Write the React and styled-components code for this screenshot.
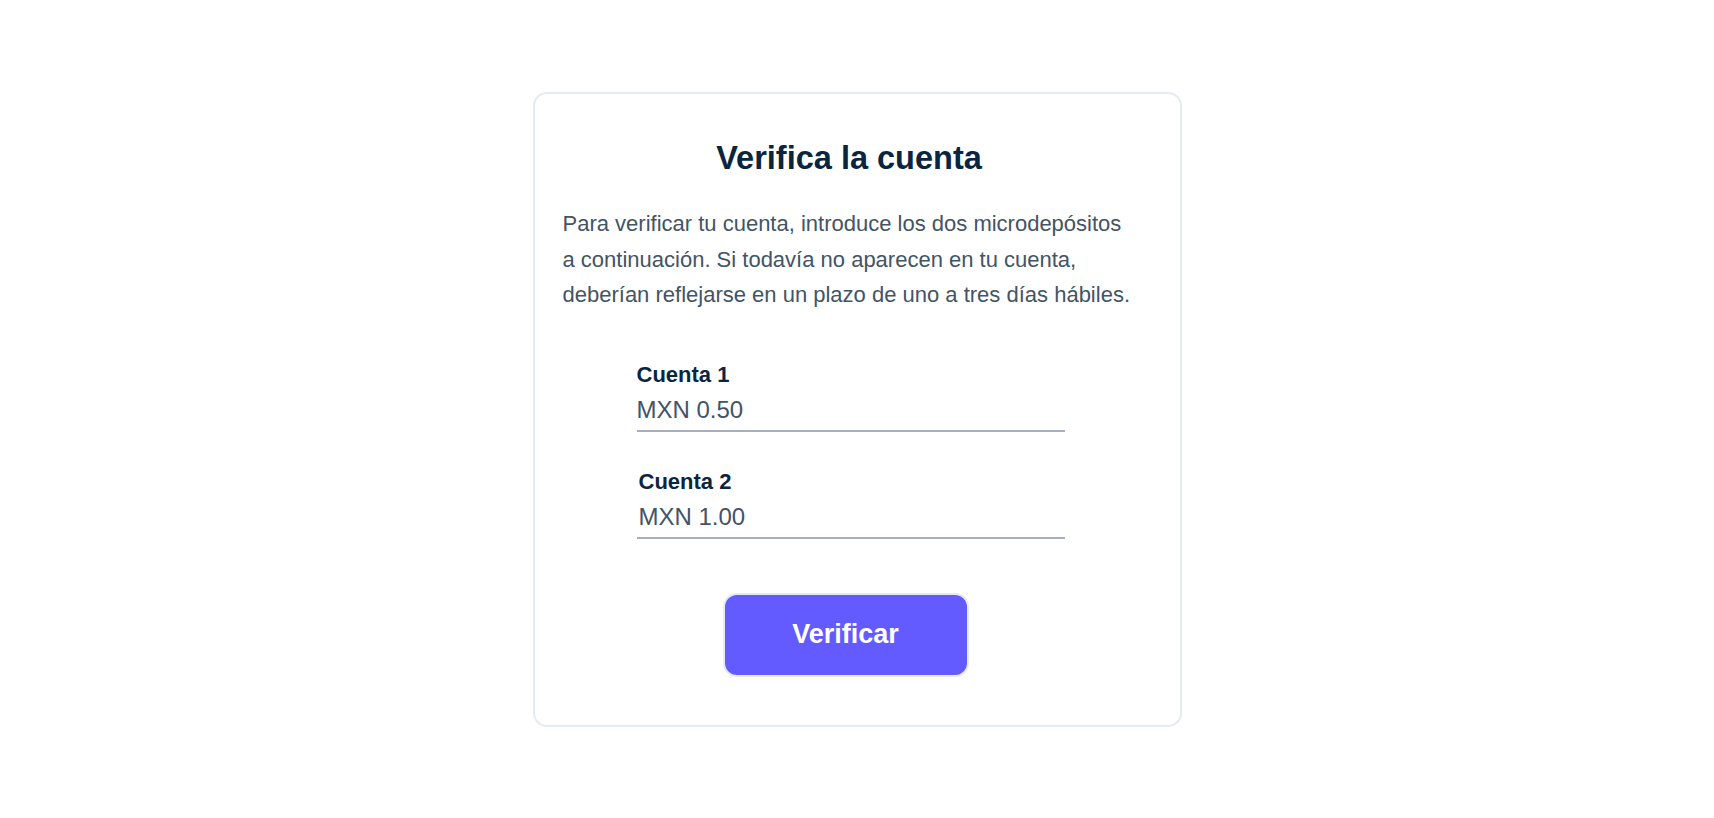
import React from 'react';
import styled, { createGlobalStyle } from 'styled-components';

const GlobalStyle = createGlobalStyle`
body {
    margin: 0;
    background: #ffffff;
    font-family: "Liberation Sans", Arial, sans-serif;
}
`;

const Page = styled.main`
display: flex;
justify-content: center;
padding-top: 92px;
min-height: 818px;
box-sizing: border-box;
`;

const Card = styled.form`
display: flex;
flex-direction: column;
align-items: flex-start;
box-sizing: border-box;
width: 649px;
height: 635px;
padding: 44px 44px 0 28px;
background: #ffffff;
border: 2px solid #e6ebf1;
border-radius: 14px;
`;

const Title = styled.h1`
align-self: stretch;
margin: 0;
font-size: 32.5px;
line-height: 40px;
font-weight: 700;
color: #0a2540;
text-align: center;
`;

const Intro = styled.p`
max-width: 573px;
margin: 28px 0 0 0;
font-size: 22px;
line-height: 35.5px;
color: #425466;
`;

const Fields = styled.div`
display: flex;
flex-direction: column;
gap: 36px;
width: 428px;
margin: 48px 0 0 74px;
`;

const Field = styled.label`
display: flex;
flex-direction: column;
gap: 6px;
`;

const Label = styled.span`
padding-left: ${(p) => (p.$inset ? '2px' : '0')};
font-size: 22px;
line-height: 28px;
font-weight: 700;
color: #0a2540;
`;

const Input = styled.input`
box-sizing: border-box;
width: 100%;
margin: 0;
padding: 0 0 5px ${(p) => (p.$inset ? '2px' : '0')};
border: none;
border-bottom: 2px solid #a6b0bd;
background: transparent;
font-family: inherit;
font-size: 24px;
line-height: 30px;
color: #425466;
outline: none;
`;

const Button = styled.button`
box-sizing: border-box;
width: 246px;
height: 84px;
margin: 54px 0 0 160px;
background: #635bff;
border: 2px solid #e6ebf1;
border-radius: 14px;
font-family: inherit;
font-size: 27px;
font-weight: 700;
color: #ffffff;
cursor: pointer;
`;

const accounts = [
    { id: 'cuenta-1', label: 'Cuenta 1', value: 'MXN 0.50' },
    { id: 'cuenta-2', label: 'Cuenta 2', value: 'MXN 1.00', inset: true },
];

export default function App() {
    return (
        <>
            <GlobalStyle />
            <Page>
                <Card onSubmit={(e) => e.preventDefault()}>
                    <Title>Verifica la cuenta</Title>
                    <Intro>
                        Para verificar tu cuenta, introduce los dos microdepósitos a continuación. Si todavía no aparecen en tu cuenta, deberían reflejarse en un plazo de uno a tres días hábiles.
                    </Intro>

                    <Fields>
                        {accounts.map((acc) => (
                            <Field key={acc.id} htmlFor={acc.id}>
                                <Label $inset={acc.inset}>{acc.label}</Label>
                                <Input id={acc.id} $inset={acc.inset} defaultValue={acc.value} />
                            </Field>
                        ))}
                    </Fields>

                    <Button type="submit">Verificar</Button>
                </Card>
            </Page>
        </>
    );
}
